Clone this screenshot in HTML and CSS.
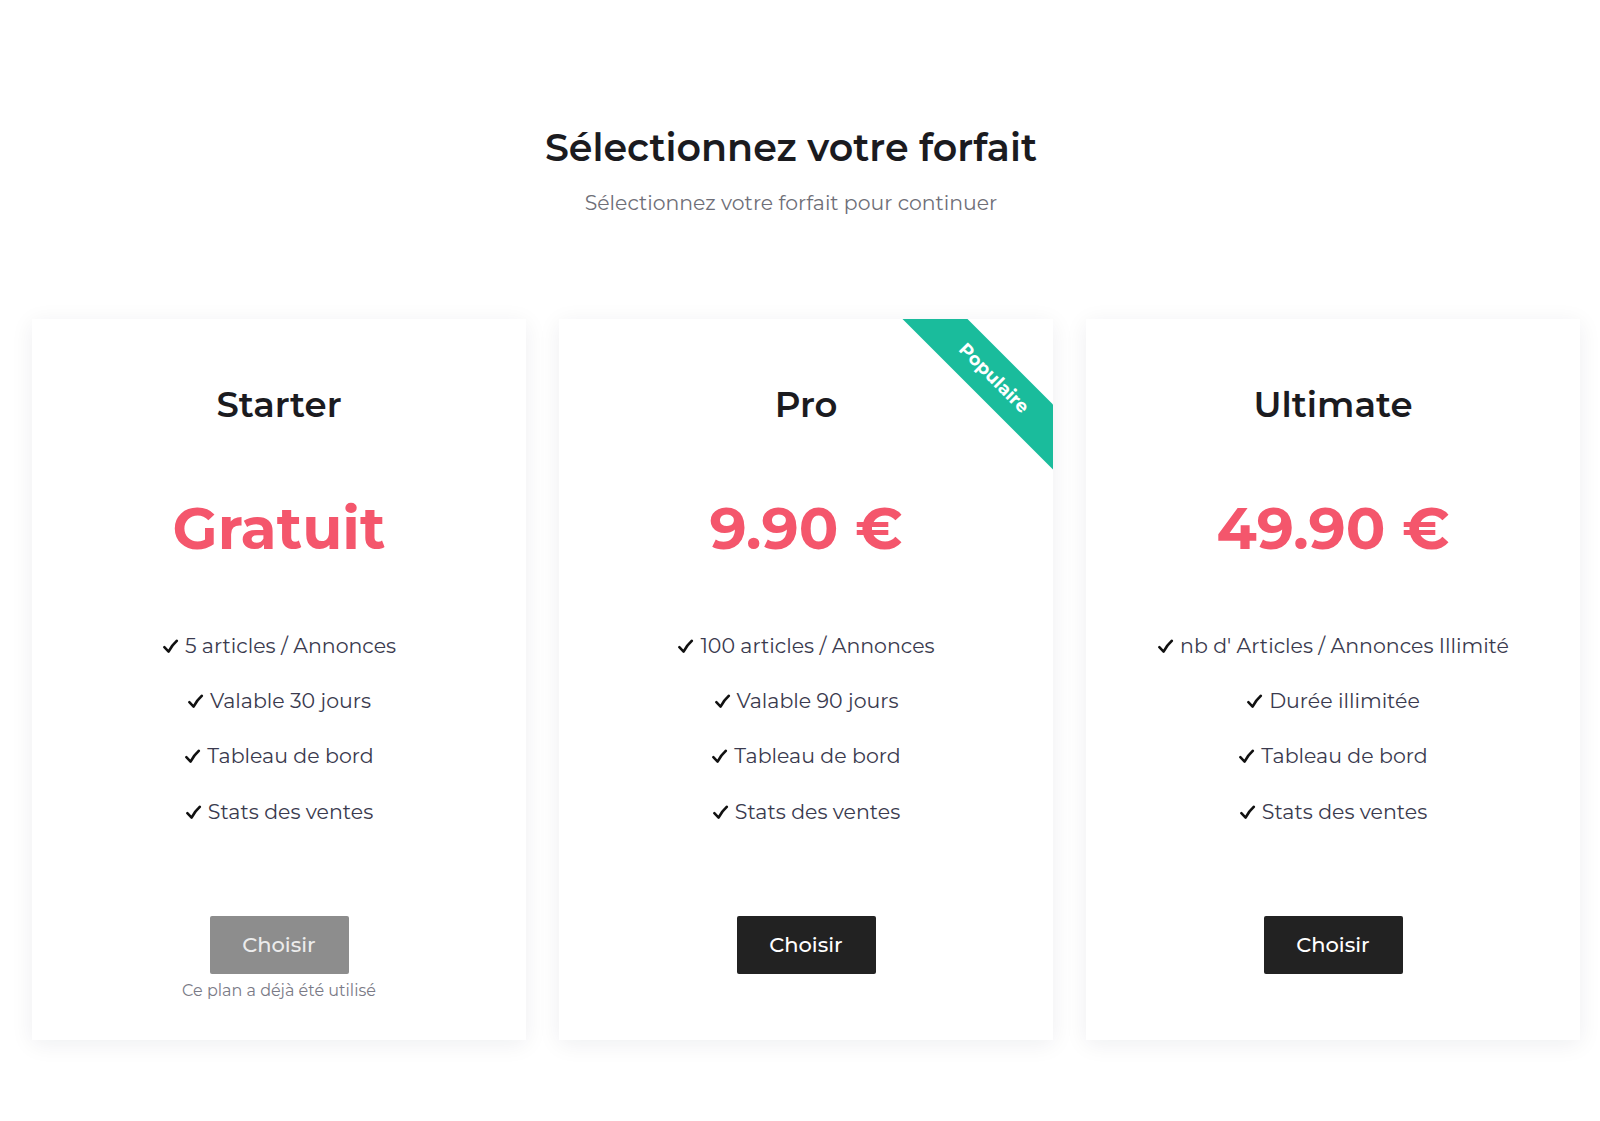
FILE: index.html
```html
<!DOCTYPE html>
<html lang="fr">
<head>
<meta charset="utf-8">
<title>Sélectionnez votre forfait</title>
<link rel="stylesheet" href="styles.css">
</head>
<body>
<main class="page">
  <header class="intro">
    <h1 class="intro-title">Sélectionnez votre forfait</h1>
    <p class="intro-sub">Sélectionnez votre forfait pour continuer</p>
  </header>
  <section class="plans">
    <article class="plan">
      <h2 class="plan-name">Starter</h2>
      <div class="plan-price">Gratuit</div>
      <ul class="plan-features">
        <li><svg class="check" viewBox="0 0 16 16"><path d="M2.2 8.6 L6.2 12.8 C8.4 8.6 10.8 5.4 14 2.6"/></svg>5 articles / Annonces</li>
        <li><svg class="check" viewBox="0 0 16 16"><path d="M2.2 8.6 L6.2 12.8 C8.4 8.6 10.8 5.4 14 2.6"/></svg>Valable 30 jours</li>
        <li><svg class="check" viewBox="0 0 16 16"><path d="M2.2 8.6 L6.2 12.8 C8.4 8.6 10.8 5.4 14 2.6"/></svg>Tableau de bord</li>
        <li><svg class="check" viewBox="0 0 16 16"><path d="M2.2 8.6 L6.2 12.8 C8.4 8.6 10.8 5.4 14 2.6"/></svg>Stats des ventes</li>
      </ul>
      <button class="btn btn-disabled" type="button">Choisir</button>
      <p class="plan-note">Ce plan a déjà été utilisé</p>
    </article>
    <article class="plan">
      <div class="ribbon">Populaire</div>
      <h2 class="plan-name">Pro</h2>
      <div class="plan-price">9.90 €</div>
      <ul class="plan-features">
        <li><svg class="check" viewBox="0 0 16 16"><path d="M2.2 8.6 L6.2 12.8 C8.4 8.6 10.8 5.4 14 2.6"/></svg>100 articles / Annonces</li>
        <li><svg class="check" viewBox="0 0 16 16"><path d="M2.2 8.6 L6.2 12.8 C8.4 8.6 10.8 5.4 14 2.6"/></svg>Valable 90 jours</li>
        <li><svg class="check" viewBox="0 0 16 16"><path d="M2.2 8.6 L6.2 12.8 C8.4 8.6 10.8 5.4 14 2.6"/></svg>Tableau de bord</li>
        <li><svg class="check" viewBox="0 0 16 16"><path d="M2.2 8.6 L6.2 12.8 C8.4 8.6 10.8 5.4 14 2.6"/></svg>Stats des ventes</li>
      </ul>
      <button class="btn" type="button">Choisir</button>
    </article>
    <article class="plan">
      <h2 class="plan-name">Ultimate</h2>
      <div class="plan-price">49.90 €</div>
      <ul class="plan-features">
        <li><svg class="check" viewBox="0 0 16 16"><path d="M2.2 8.6 L6.2 12.8 C8.4 8.6 10.8 5.4 14 2.6"/></svg>nb d' Articles / Annonces Illimité</li>
        <li><svg class="check" viewBox="0 0 16 16"><path d="M2.2 8.6 L6.2 12.8 C8.4 8.6 10.8 5.4 14 2.6"/></svg>Durée illimitée</li>
        <li><svg class="check" viewBox="0 0 16 16"><path d="M2.2 8.6 L6.2 12.8 C8.4 8.6 10.8 5.4 14 2.6"/></svg>Tableau de bord</li>
        <li><svg class="check" viewBox="0 0 16 16"><path d="M2.2 8.6 L6.2 12.8 C8.4 8.6 10.8 5.4 14 2.6"/></svg>Stats des ventes</li>
      </ul>
      <button class="btn" type="button">Choisir</button>
    </article>
  </section>
</main>
</body>
</html>
```
FILE: styles.css
```css
* { box-sizing: border-box; }
html, body {
  margin: 0;
  padding: 0;
  background: #ffffff;
}
body {
  font-family: Montserrat, "DejaVu Sans", sans-serif;
  color: #2b2b3a;
}
.page {
  padding: 121px 20px 60px 32px;
}
.intro {
  padding-right: 30px;
  text-align: center;
}
.intro-title {
  margin: 0;
  font-size: 38px;
  line-height: 54px;
  font-weight: 600;
  color: #1b1b1f;
}
.intro-sub {
  margin: 15px 0 0;
  font-size: 20.4px;
  line-height: 26px;
  color: #6f6f78;
  font-weight: 400;
}
.plans {
  margin-top: 103px;
  display: grid;
  grid-template-columns: repeat(3, 494px);
  column-gap: 33px;
}
.plan {
  position: relative;
  overflow: hidden;
  background: #fff;
  box-shadow: 0 4px 22px rgba(20, 30, 60, 0.07);
  padding: 63px 20px 39px;
  text-align: center;
  display: flex;
  flex-direction: column;
  align-items: center;
}
.plan-name {
  margin: 0;
  font-size: 35.5px;
  line-height: 46px;
  font-weight: 600;
  color: #1b1b1f;
}
.plan-price {
  margin-top: 62px;
  font-size: 58.5px;
  line-height: 76px;
  font-weight: 700;
  color: #f4566c;
}
.plan-features {
  list-style: none;
  margin: 52px 0 0;
  padding: 0;
}
.plan-features li {
  font-size: 20.5px;
  line-height: 55.2px;
  color: #3a3a4e;
}
.check {
  width: 17px;
  height: 17px;
  margin-right: 6px;
  vertical-align: -2px;
  fill: none;
  stroke: #111;
  stroke-width: 2.4;
  stroke-linecap: round;
  stroke-linejoin: round;
}
.btn {
  margin-top: 77px;
  width: 139px;
  height: 58px;
  border: none;
  border-radius: 2px;
  background: #222222;
  color: #ffffff;
  font-family: inherit;
  font-size: 21px;
  font-weight: 500;
  cursor: pointer;
}
.btn-disabled {
  background: #8d8d8d;
  color: #ececec;
}
.plan-note {
  margin: 7px 0 0;
  font-size: 16px;
  line-height: 20px;
  color: #7a7a86;
}
.ribbon {
  position: absolute;
  top: 36px;
  right: -51px;
  width: 220px;
  height: 46px;
  line-height: 46px;
  transform: rotate(45deg);
  background: #1abc9c;
  color: #fff;
  font-size: 18px;
  font-weight: 700;
  text-align: center;
}
```
